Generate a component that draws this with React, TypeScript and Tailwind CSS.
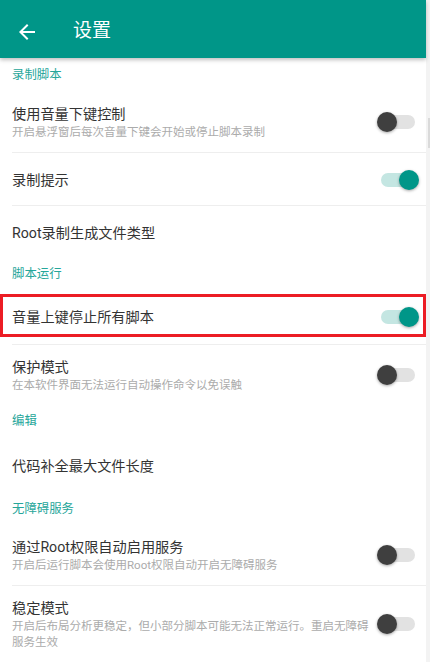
import React from "react";

function Toggle({ on }: { on: boolean }) {
  return (
    <div className="relative w-[42px] h-[22px] shrink-0 mr-[7px]">
      <div
        className={
          "absolute left-[4px] right-[4px] top-[4px] h-[14px] rounded-full " +
          (on ? "bg-[#c4e6e2]" : "bg-[#e2e2e2]")
        }
      />
      <div
        className={
          "absolute top-px w-[20px] h-[20px] rounded-full shadow-[0_1px_3px_rgba(0,0,0,0.35)] " +
          (on ? "right-0 bg-[#009688]" : "left-0 bg-[#3f3f3f]")
        }
      />
    </div>
  );
}

function Header({ text, h }: { text: string; h: string }) {
  return (
    <div className={"flex items-center pl-3 text-[12.4px] text-[#26a69a] " + h}>
      {text}
    </div>
  );
}

function Divider() {
  return <div className="h-px ml-3 bg-[#eeeeee]" />;
}

function Row({
  title,
  sub,
  toggle,
  h,
}: {
  title: string;
  sub?: string;
  toggle?: "on" | "off";
  h?: string;
}) {
  return (
    <div className={"flex items-center pl-3 " + (h ?? "py-3")}>
      <div className="flex-1 min-w-0">
        <div className="text-[14.2px] leading-[20px] text-[#333333]">{title}</div>
        {sub && (
          <div className="text-[11.5px] leading-[16px] text-[#ababab]">{sub}</div>
        )}
      </div>
      {toggle && <Toggle on={toggle === "on"} />}
    </div>
  );
}

export default function App() {
  return (
    <div
      className="flex w-[430px] h-[662px] overflow-hidden bg-white"
      style={{ fontFamily: 'Roboto, "Noto Sans CJK SC", sans-serif' }}
    >
      <div className="w-[426px] flex flex-col">
        <div className="relative z-10 h-[58px] shrink-0 bg-[#009688] flex items-center pt-[5px] shadow-[0_2px_4px_rgba(0,0,0,0.25)]">
          <svg
            width="24"
            height="24"
            viewBox="0 0 24 24"
            className="ml-[15px]"
            fill="#ffffff"
          >
            <path d="M20 11H7.83l5.59-5.59L12 4l-8 8 8 8 1.41-1.41L7.83 13H20v-2z" />
          </svg>
          <div className="ml-[34px] text-[19px] text-white">设置</div>
        </div>

        <Header text="录制脚本" h="h-[35px]" />
        <Row
          title="使用音量下键控制"
          sub="开启悬浮窗后每次音量下键会开始或停止脚本录制"
          toggle="off"
          h="h-[60px]"
        />
        <Divider />
        <Row title="录制提示" toggle="on" h="h-[53px] pt-[2px]" />
        <Divider />
        <Row title="Root录制生成文件类型" h="h-[54px]" />

        <Header text="脚本运行" h="h-[31px]" />
        <div className="relative">
          <Row title="音量上键停止所有脚本" toggle="on" h="h-[54px]" />
          <div className="absolute left-0 right-0 top-[4px] bottom-[7px] border-[3px] border-[#ec1c24]" />
        </div>
        <Divider />
        <Row
          title="保护模式"
          sub="在本软件界面无法运行自动操作命令以免误触"
          toggle="off"
          h="h-[60px]"
        />

        <Header text="编辑" h="h-[35px]" />
        <Row title="代码补全最大文件长度" h="h-[54px]" />

        <Header text="无障碍服务" h="h-[34px]" />
        <Row
          title="通过Root权限自动启用服务"
          sub="开启后运行脚本会使用Root权限自动开启无障碍服务"
          toggle="off"
          h="h-[60px]"
        />
        <Divider />
        <Row
          title="稳定模式"
          sub="开启后布局分析更稳定，但小部分脚本可能无法正常运行。重启无障碍服务生效"
          toggle="off"
        />
      </div>
      <div className="w-[4px] bg-[#f3f3f3] flex flex-col">
        <div className="h-[118px]" />
        <div className="h-[30px] w-[2px] ml-[2px] bg-[#dadada]" />
      </div>
    </div>
  );
}
